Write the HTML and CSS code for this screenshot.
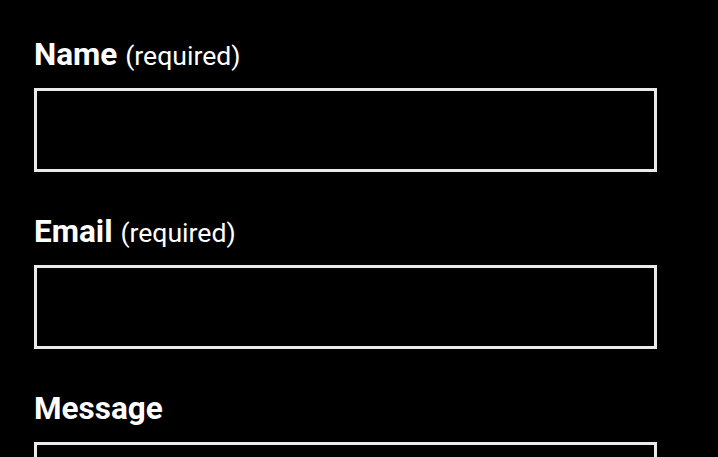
FILE: index.html
```html
<!DOCTYPE html>
<html>
<head>
<meta charset="utf-8">
<link rel="stylesheet" href="styles.css">
</head>
<body>
<form class="form">
  <div class="field">
    <label class="label" for="name">Name <span class="req">(required)</span></label>
    <input class="input" id="name" type="text">
  </div>
  <div class="field">
    <label class="label" for="email">Email <span class="req">(required)</span></label>
    <input class="input" id="email" type="email">
  </div>
  <div class="field">
    <label class="label" for="msg">Message</label>
    <textarea class="input area" id="msg"></textarea>
  </div>
</form>
</body>
</html>
```
FILE: styles.css
```css
html, body {
  margin: 0;
  background: #000;
  color: #fff;
  font-family: Roboto, "Noto Sans", sans-serif;
}
.form {
  padding: 28px 0 0 34px;
  display: flex;
  flex-direction: column;
  gap: 33px;
}
.field {
  display: flex;
  flex-direction: column;
  gap: 12px;
}
.label {
  font-size: 31.5px;
  font-weight: 700;
  line-height: 48px;
  height: 45px;
  padding-top: 3px;
}
.req {
  font-size: 26.6px;
  font-weight: 400;
  line-height: 0;
}
.input {
  box-sizing: border-box;
  width: 623px;
  height: 84px;
  background: #000;
  border: 3px solid #eaeaea;
  margin: 0;
  padding: 0;
  color: #fff;
  font: inherit;
}
.area {
  height: 200px;
  resize: none;
}
```
